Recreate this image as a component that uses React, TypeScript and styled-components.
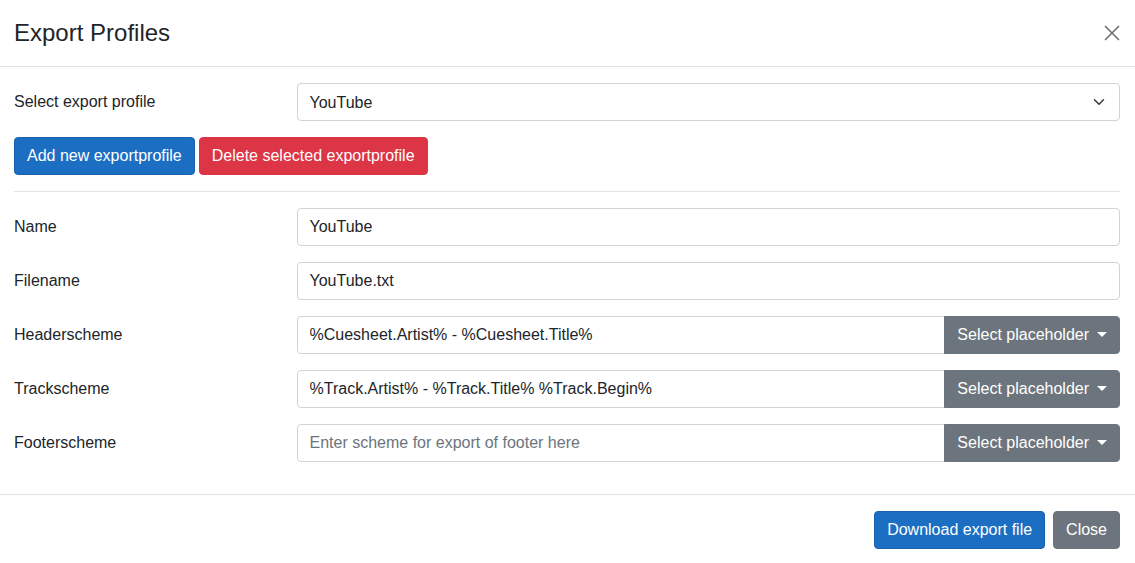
import styled, { createGlobalStyle } from "styled-components";

const GlobalStyle = createGlobalStyle`
  html, body {
    margin: 0;
    padding: 0;
    background: #ffffff;
  }
  body {
    font-family: "Liberation Sans", Arial, sans-serif;
    font-size: 16px;
    color: #212529;
  }
  * {
    box-sizing: border-box;
  }
`;

const fields = [
  { label: "Name", value: "YouTube" },
  { label: "Filename", value: "YouTube.txt" },
];

const schemes = [
  { label: "Headerscheme", value: "%Cuesheet.Artist% - %Cuesheet.Title%", placeholder: "" },
  { label: "Trackscheme", value: "%Track.Artist% - %Track.Title% %Track.Begin%", placeholder: "" },
  { label: "Footerscheme", value: "", placeholder: "Enter scheme for export of footer here" },
];

export default function App() {
  return (
    <>
      <GlobalStyle />
      <Modal>
        <Header>
          <Title>Export Profiles</Title>
          <CloseX aria-label="Close">
            <svg width="16" height="16" viewBox="0 0 16 16">
              <path d="M1 1 L15 15 M15 1 L1 15" stroke="#6f6f6f" strokeWidth="1.6" fill="none" />
            </svg>
          </CloseX>
        </Header>
        <Body>
          <FormRow>
            <Label>Select export profile</Label>
            <SelectBox defaultValue="YouTube">
              <option>YouTube</option>
            </SelectBox>
          </FormRow>
          <ButtonBar>
            <Button $variant="primary">Add new exportprofile</Button>
            <Button $variant="danger">Delete selected exportprofile</Button>
          </ButtonBar>
          <Divider />
          <Fields>
            {fields.map((f) => (
              <FormRow key={f.label}>
                <Label>{f.label}</Label>
                <Input defaultValue={f.value} />
              </FormRow>
            ))}
            {schemes.map((s) => (
              <FormRow key={s.label}>
                <Label>{s.label}</Label>
                <InputGroup>
                  <GroupInput defaultValue={s.value} placeholder={s.placeholder} />
                  <GroupButton>
                    Select placeholder
                    <Caret />
                  </GroupButton>
                </InputGroup>
              </FormRow>
            ))}
          </Fields>
        </Body>
        <Footer>
          <Button $variant="primary">Download export file</Button>
          <Button $variant="secondary">Close</Button>
        </Footer>
      </Modal>
    </>
  );
}

const Modal = styled.div`
  width: 1135px;
  height: 563px;
  background: #ffffff;
  display: flex;
  flex-direction: column;
`;

const Header = styled.div`
  display: flex;
  align-items: center;
  justify-content: space-between;
  padding: 15px 15px 15px 14px;
  border-bottom: 1px solid #dee2e6;
`;

const Title = styled.h5`
  margin: 0;
  font-size: 24px;
  font-weight: 400;
  line-height: 36px;
  color: #212529;
`;

const CloseX = styled.button`
  width: 16px;
  height: 16px;
  padding: 0;
  border: 0;
  background: transparent;
  display: flex;
  cursor: pointer;
`;

const Body = styled.div`
  padding: 16px 15px 32px 14px;
`;

const FormRow = styled.div`
  display: grid;
  grid-template-columns: calc(25% - 18px) 1fr;
  column-gap: 24px;
  align-items: center;
`;

const Label = styled.label`
  font-size: 16px;
  line-height: 24px;
  color: #212529;
`;

const SelectBox = styled.select`
  appearance: none;
  width: 100%;
  height: 38px;
  padding: 6px 36px 6px 12px;
  font-family: inherit;
  font-size: 16px;
  color: #212529;
  border: 1px solid #ced4da;
  border-radius: 4px;
  background: #fff
    url("data:image/svg+xml,%3csvg xmlns='http://www.w3.org/2000/svg' viewBox='0 0 16 16'%3e%3cpath fill='none' stroke='%23343a40' stroke-linecap='round' stroke-linejoin='round' stroke-width='2' d='M2 5l6 6 6-6'/%3e%3c/svg%3e")
    no-repeat right 12px center / 16px 12px;
`;

const ButtonBar = styled.div`
  display: flex;
  gap: 4px;
  margin-top: 16px;
`;

const colors = {
  primary: { bg: "#1b6ec2", border: "#1861ac" },
  danger: { bg: "#dc3545", border: "#dc3545" },
  secondary: { bg: "#6c757d", border: "#6c757d" },
};

const Button = styled.button<{ $variant: keyof typeof colors }>`
  height: 38px;
  padding: 6px 12px;
  font-family: inherit;
  font-size: 16px;
  line-height: 24px;
  color: #ffffff;
  background: ${(p) => colors[p.$variant].bg};
  border: 1px solid ${(p) => colors[p.$variant].border};
  border-radius: 4px;
  cursor: pointer;
`;

const Divider = styled.hr`
  margin: 16px 0;
  border: 0;
  border-top: 1px solid #e3e3e3;
`;

const Fields = styled.div`
  display: flex;
  flex-direction: column;
  gap: 16px;
`;

const Input = styled.input`
  width: 100%;
  height: 38px;
  padding: 6px 12px;
  font-family: inherit;
  font-size: 16px;
  color: #212529;
  border: 1px solid #ced4da;
  border-radius: 4px;
  outline: none;

  &::placeholder {
    color: #6c757d;
  }
`;

const InputGroup = styled.div`
  display: flex;
  width: 100%;
`;

const GroupInput = styled(Input)`
  flex: 1;
  min-width: 0;
  border-top-right-radius: 0;
  border-bottom-right-radius: 0;
`;

const GroupButton = styled.button`
  display: flex;
  align-items: center;
  height: 38px;
  padding: 6px 12px;
  margin-left: -1px;
  font-family: inherit;
  font-size: 16px;
  color: #ffffff;
  background: #6c757d;
  border: 1px solid #6c757d;
  border-radius: 0 4px 4px 0;
  white-space: nowrap;
  cursor: pointer;
`;

const Caret = styled.span`
  display: inline-block;
  margin-left: 8px;
  border-top: 5px solid #ffffff;
  border-left: 5px solid transparent;
  border-right: 5px solid transparent;
  margin-top: -2px;
`;

const Footer = styled.div`
  display: flex;
  justify-content: flex-end;
  gap: 8px;
  padding: 16px 15px 14px 14px;
  border-top: 1px solid #dee2e6;
`;
